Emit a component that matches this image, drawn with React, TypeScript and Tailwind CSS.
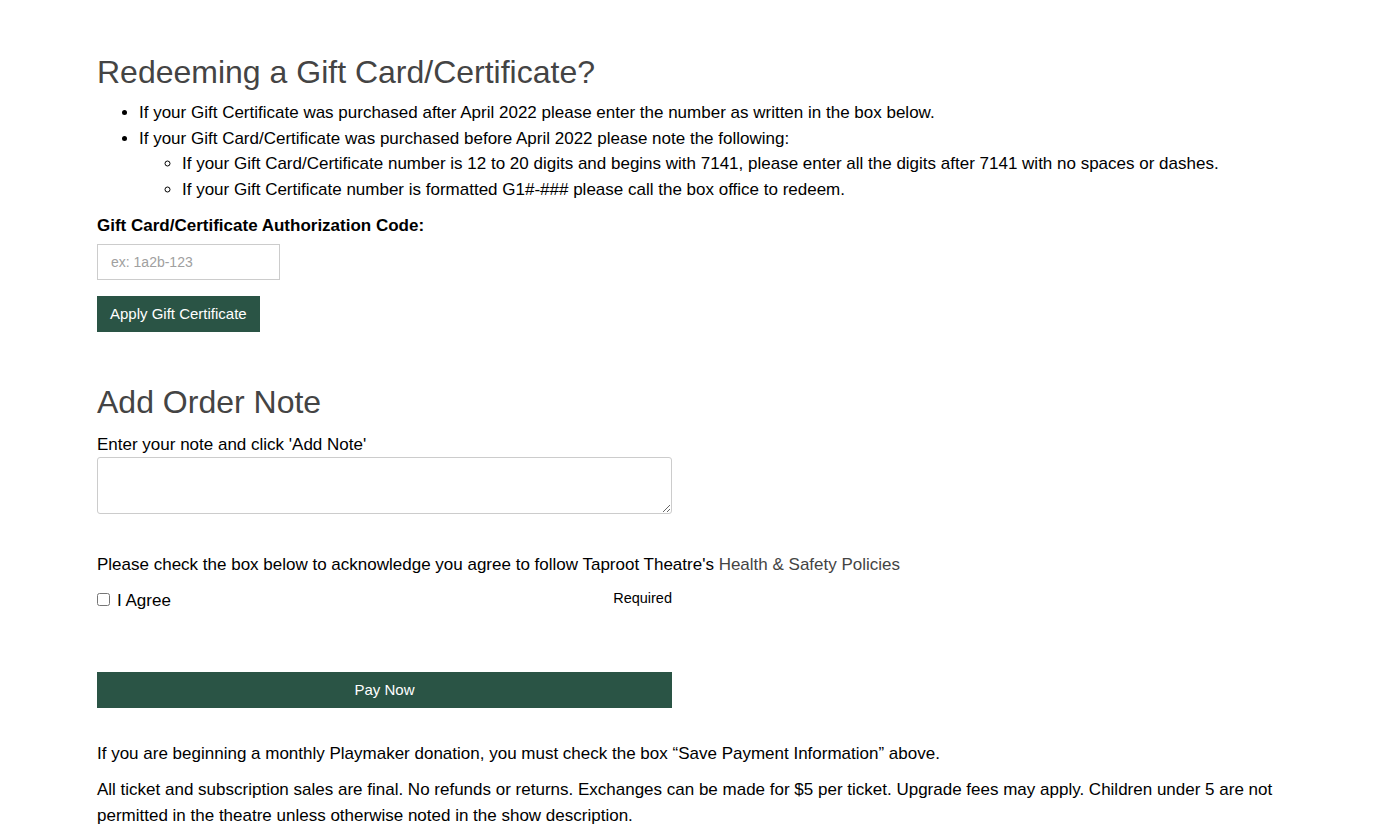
import React from "react";

export default function App() {
  return (
    <div className="min-h-[840px] bg-white text-black" style={{ fontFamily: '"Liberation Sans", Arial, Helvetica, sans-serif' }}>
      <div className="pl-[97px] pr-[96px] pt-[50px] text-[17px] leading-[25.5px]">
        <h1 className="text-[32px] leading-[44px] text-[#444444] font-normal">Redeeming a Gift Card/Certificate?</h1>
        <ul className="mt-[6px] list-disc pl-[42px]">
          <li>If your Gift Certificate was purchased after April 2022 please enter the number as written in the box below.</li>
          <li>
            If your Gift Card/Certificate was purchased before April 2022 please note the following:
            <ul className="list-[circle] pl-[43px]">
              <li>If your Gift Card/Certificate number is 12 to 20 digits and begins with 7141, please enter all the digits after 7141 with no spaces or dashes.</li>
              <li>If your Gift Certificate number is formatted G1#-### please call the box office to redeem.</li>
            </ul>
          </li>
        </ul>
        <div className="mt-[11px] font-bold">Gift Card/Certificate Authorization Code:</div>
        <input
          placeholder="ex: 1a2b-123"
          className="mt-[5px] block h-[36px] w-[183px] border border-[#cccccc] px-[13px] text-[14px] placeholder:text-[#a0a0a0] outline-none"
        />
        <button className="mt-[16px] block h-[36px] bg-[#2a5445] px-[13px] text-[15px] text-white">Apply Gift Certificate</button>

        <h2 className="mt-[48px] text-[32px] leading-[44px] text-[#444444] font-normal">Add Order Note</h2>
        <div className="mt-[8px]">Enter your note and click 'Add Note'</div>
        <textarea className="mt-0 block h-[57px] w-[575px] rounded-[3px] border border-[#cccccc] outline-none" />

        <div className="mt-[38px]">
          Please check the box below to acknowledge you agree to follow Taproot Theatre's{" "}
          <span className="text-[#444444]">Health &amp; Safety Policies</span>
        </div>
        <div className="mt-[10px] flex w-[575px] items-start justify-between">
          <label className="flex items-center gap-[7px]">
            <input type="checkbox" className="h-[13px] w-[13px] mt-[-2px]" />
            <span>I Agree</span>
          </label>
          <span className="text-[14.5px] leading-[18px] mt-[1px]">Required</span>
        </div>

        <button className="mt-[59px] block h-[36px] w-[575px] bg-[#2a5445] text-[15px] text-white">Pay Now</button>

        <p className="mt-[33px]">If you are beginning a monthly Playmaker donation, you must check the box “Save Payment Information” above.</p>
        <p className="mt-[10px] max-w-[1200px] leading-[26px]">
          All ticket and subscription sales are final. No refunds or returns. Exchanges can be made for $5 per ticket. Upgrade fees may apply. Children under 5 are not permitted in the theatre unless otherwise noted in the show description.
        </p>
      </div>
    </div>
  );
}
